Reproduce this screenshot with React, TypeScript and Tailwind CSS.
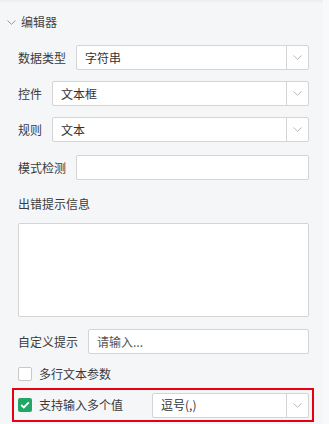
import React from "react";

const font = { fontFamily: '"Noto Sans CJK SC", "Noto Sans", sans-serif' };

function Chevron({ className = "" }: { className?: string }) {
  return (
    <svg width="9" height="5" viewBox="0 0 9 5" className={className}>
      <path d="M0.5 0.5 L4.5 4.3 L8.5 0.5" fill="none" stroke="currentColor" strokeWidth="1" />
    </svg>
  );
}

function Select({ value, className = "" }: { value: string; className?: string }) {
  return (
    <div className={`flex h-[25px] flex-1 items-stretch rounded-[2px] border border-[#d4d4d4] bg-white ${className}`}>
      <div className="flex flex-1 items-center pl-[8px] text-[12px] text-[#333]">{value}</div>
      <div className="flex w-[22px] items-center justify-center border-l border-[#d4d4d4] text-[#b8b8b8]">
        <Chevron />
      </div>
    </div>
  );
}

function Input({ placeholder }: { placeholder?: string }) {
  return (
    <div className="flex h-[25px] flex-1 items-center rounded-[2px] border border-[#d4d4d4] bg-white pl-[8px] text-[12px] text-[#555]">
      {placeholder}
    </div>
  );
}

export default function App() {
  return (
    <div className="relative h-[424px] w-[329px] overflow-hidden bg-[#f5f6f8] text-[#3a3a3a]" style={font}>
      <div className="h-[2px] bg-[#eceef1]" />
      <div className="absolute right-0 top-0 h-full w-[6px] bg-[#f8f9fa]" />
      <div className="flex flex-col pl-[18px] pr-[20px]">
        <div className="ml-[-11px] mt-[12px] flex h-[16px] items-center text-[12px] text-[#444]">
          <Chevron className="mr-[5px] text-[#999]" />
          <span>编辑器</span>
        </div>

        <div className="mt-[15px] flex items-center">
          <div className="w-[58px] text-[12px]">数据类型</div>
          <Select value="字符串" />
        </div>
        <div className="mt-[11px] flex items-center">
          <div className="w-[34px] text-[12px]">控件</div>
          <Select value="文本框" />
        </div>
        <div className="mt-[11px] flex items-center">
          <div className="w-[34px] text-[12px]">规则</div>
          <Select value="文本" />
        </div>
        <div className="mt-[13px] flex items-center">
          <div className="w-[58px] text-[12px]">模式检测</div>
          <Input />
        </div>

        <div className="mt-[16px] flex h-[16px] items-center text-[12px]">出错提示信息</div>
        <div className="mt-[11px] h-[94px] rounded-[2px] border border-[#d4d4d4] bg-white" />

        <div className="mt-[12px] flex items-center">
          <div className="w-[70px] text-[12px]">自定义提示</div>
          <Input placeholder="请输入..." />
        </div>

        <div className="mt-[12px] flex h-[16px] items-center">
          <div className="h-[14px] w-[14px] rounded-[2px] border border-[#c8c8c8] bg-white" />
          <span className="ml-[7px] text-[12px]">多行文本参数</span>
        </div>

        <div className="ml-[-6px] mr-[-5px] mt-[6px] flex h-[34px] items-center border-2 border-[#e60012] pl-[4px] pr-[3px]">
          <div className="flex h-[14px] w-[14px] items-center justify-center rounded-[2px] bg-[#23a566]">
            <svg width="10" height="8" viewBox="0 0 10 8">
              <path d="M1.2 4 L3.8 6.4 L8.8 1.4" fill="none" stroke="white" strokeWidth="1.8" />
            </svg>
          </div>
          <span className="ml-[7px] w-[113px] text-[12px]">支持输入多个值</span>
          <Select value="逗号(,)" className="ml-0" />
        </div>
      </div>
    </div>
  );
}
